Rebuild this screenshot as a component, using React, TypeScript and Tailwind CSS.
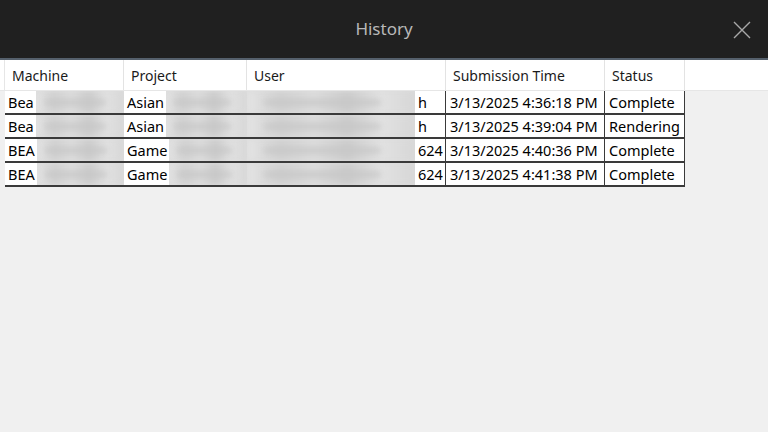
import React from "react";

type Row = {
  machine: string;
  project: string;
  userTail: string;
  time: string;
  status: string;
};

const rows: Row[] = [
  { machine: "Bea", project: "Asian", userTail: "h", time: "3/13/2025 4:36:18 PM", status: "Complete" },
  { machine: "Bea", project: "Asian", userTail: "h", time: "3/13/2025 4:39:04 PM", status: "Rendering" },
  { machine: "BEA", project: "Game", userTail: "624", time: "3/13/2025 4:40:36 PM", status: "Complete" },
  { machine: "BEA", project: "Game", userTail: "624", time: "3/13/2025 4:41:38 PM", status: "Complete" },
];

// redacted bits in the screenshot are just soft grey smudges
const Smudge: React.FC<{ className?: string }> = ({ className = "" }) => (
  <div className={`relative h-full overflow-hidden bg-[#dcdcdc] ${className}`}>
    <div className="absolute inset-0 blur-[3px] bg-[linear-gradient(90deg,#e4e4e4_0%,#d0d0d0_20%,#dcdcdc_40%,#cbcbcb_60%,#e2e2e2_80%,#d6d6d6_100%)]" />
    <div className="absolute left-[10%] right-[20%] top-[40%] h-[5px] rounded-full bg-[#c6c6c6] blur-[3px]" />
  </div>
);

const headers = [
  { label: "Machine", w: "w-[119px]" },
  { label: "Project", w: "w-[123px]" },
  { label: "User", w: "w-[199px]" },
  { label: "Submission Time", w: "w-[159px]" },
  { label: "Status", w: "w-[80px]" },
];

const App: React.FC = () => {
  return (
    <div className="w-[768px] h-[432px] bg-[#f0f0f0] font-['Noto_Sans',sans-serif] text-[14px] overflow-hidden">
      {/* title bar */}
      <div className="relative h-[60px] bg-[#202020] flex items-center justify-center border-b-2 border-[#55606c]">
        <span className="text-[#b8b8b8] text-[17px]">History</span>
        <button className="absolute right-[16px] top-[20px] w-[20px] h-[20px] text-[#a8a8a8]">
          <svg viewBox="0 0 20 20" className="w-full h-full" fill="none" stroke="currentColor" strokeWidth="1.4">
            <path d="M2 2 L18 18 M18 2 L2 18" />
          </svg>
        </button>
      </div>

      {/* header row */}
      <div className="flex h-[31px] bg-white border-b border-[#e6e6e6]">
        <div className="w-[5px] border-r border-[#e6e6e6]" />
        {headers.map((h) => (
          <div key={h.label} className={`${h.w} flex items-center pl-[7px] pt-[1px] border-r border-[#e3e3e3] text-[#1a1a1a]`}>
            {h.label}
          </div>
        ))}
        <div className="flex-1" />
      </div>

      {/* data rows */}
      <div className="ml-[5px] w-[680px] text-[14.5px]">
        {rows.map((r, i) => (
          <div key={i} className="flex h-[24px] bg-white border-b-2 border-[#3a3a3a] text-black leading-none">
            <div className="w-[119px] flex items-center">
              <span className="pl-[3px] pr-[2px] shrink-0 whitespace-nowrap">{r.machine}</span>
              <Smudge className="flex-1" />
            </div>
            <div className="w-[123px] flex items-center">
              <span className="pl-[3px] pr-[2px] shrink-0 whitespace-nowrap">{r.project}</span>
              <Smudge className="flex-1" />
            </div>
            <div className="w-[199px] flex items-center border-r border-[#3a3a3a]">
              <Smudge className="w-[168px]" />
              <span className="pl-[3px] whitespace-nowrap">{r.userTail}</span>
            </div>
            <div className="w-[159px] flex items-center pl-[4px] border-r border-[#3a3a3a] whitespace-nowrap">
              {r.time}
            </div>
            <div className="w-[80px] flex items-center pl-[4px] border-r border-[#3a3a3a] whitespace-nowrap">
              {r.status}
            </div>
          </div>
        ))}
      </div>
    </div>
  );
};

export default App;
